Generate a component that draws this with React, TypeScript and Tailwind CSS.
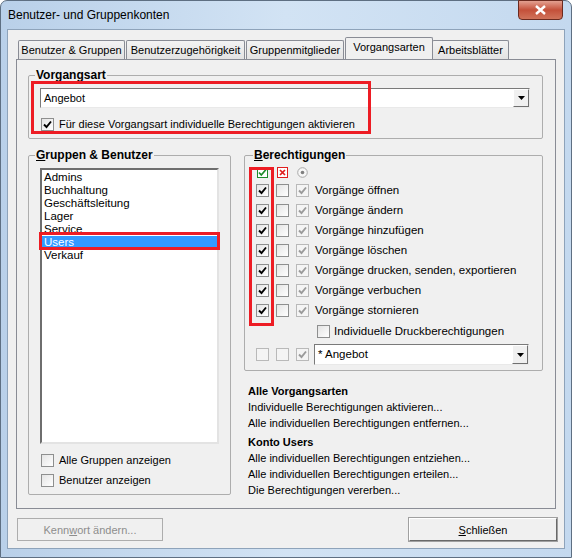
import React from "react";

const font = { fontFamily: '"Liberation Sans", Arial, sans-serif' };

function Check({ color = "#000" }: { color?: string }) {
  return (
    <svg width="9" height="9" viewBox="0 0 9 9" className="block">
      <polyline points="1,4.5 3.5,7 8,1.5" fill="none" stroke={color} strokeWidth="1.9" />
    </svg>
  );
}

function Box({ checked, disabled, grayCheck }: { checked?: boolean; disabled?: boolean; grayCheck?: boolean }) {
  return (
    <span
      className={
        "flex items-center justify-center w-[13px] h-[13px] shrink-0 border " +
        (disabled ? "border-[#b9b9b9] bg-[#f4f4f4]" : "border-[#8e8f8f] bg-gradient-to-br from-[#e4e4e4] to-white")
      }
    >
      {checked && <Check color={grayCheck ? "#9a9a9a" : "#000"} />}
    </span>
  );
}

function Combo({ value, className }: { value: string; className: string }) {
  return (
    <div className={"flex items-center bg-white border border-t-[#7a7a7a] border-l-[#7a7a7a] border-r-[#e9e9e9] border-b-[#e9e9e9] " + className}>
      <span className="flex-1 pl-[3px] leading-none">{value}</span>
      <span className="flex items-center justify-center w-[16px] h-full bg-[#f0f0f0] border border-t-white border-l-white border-r-[#707070] border-b-[#707070]">
        <svg width="7" height="4" viewBox="0 0 7 4">
          <polygon points="0,0 7,0 3.5,4" fill="#000" />
        </svg>
      </span>
    </div>
  );
}

function Tab({ label, selected, w }: { label: string; selected?: boolean; w: string }) {
  return selected ? (
    <div className={"relative z-10 -mx-[2px] h-[22px] -mb-px border border-[#898c95] border-b-0 rounded-t-[2px] bg-[#f0f0f0] pt-[2px] text-center whitespace-nowrap " + w}>
      {label}
    </div>
  ) : (
    <div className={"h-[19px] mt-[3px] border border-[#898c95] border-b-0 rounded-t-[2px] bg-gradient-to-b from-[#f3f3f3] to-[#e3e3e3] pt-[2px] text-center whitespace-nowrap " + w}>
      {label}
    </div>
  );
}

const rows = [
  "Vorgänge öffnen",
  "Vorgänge ändern",
  "Vorgänge hinzufügen",
  "Vorgänge löschen",
  "Vorgänge drucken, senden, exportieren",
  "Vorgänge verbuchen",
  "Vorgänge stornieren",
];

const groups = ["Admins", "Buchhaltung", "Geschäftsleitung", "Lager", "Service", "Users", "Verkauf"];

export default function App() {
  return (
    <div style={font} className="w-[572px] h-[558px] text-black text-[11px] leading-[14px] bg-white">
      <div className="w-[572px] h-[558px] rounded-t-[7px] border border-[#5e6f82] bg-gradient-to-r from-[#b9d0e9] via-[#d2e3f4] to-[#c4d9ef] flex flex-col">
        {/* title bar */}
        <div className="h-[28px] flex items-start">
          <span className="pl-[7px] pt-[7px] text-[12px] text-black">Benutzer- und Gruppenkonten</span>
          <div className="ml-auto mr-[8px] w-[45px] h-[20px] -mt-px rounded-b-[4px] border border-[#6b2a1f] bg-gradient-to-b from-[#e3a091] via-[#c4503a] to-[#d0735a] flex items-center justify-center">
            <svg width="11" height="10" viewBox="0 0 11 10">
              <path d="M1 1 L10 9 M10 1 L1 9" stroke="#fff" strokeWidth="2.4" />
            </svg>
          </div>
        </div>

        {/* client */}
        <div className="mx-[6px] h-[520px] border border-[#8ea3ba] bg-[#f0f0f0] px-[8px] pt-[7px] flex flex-col">
          <div className="flex h-[22px] items-start pl-[2px]">
            <Tab label="Benutzer & Gruppen" w="w-[107px]" />
            <Tab label="Benutzerzugehörigkeit" w="w-[119px] ml-[1px]" />
            <Tab label="Gruppenmitglieder" w="w-[98px] ml-[1px]" />
            <Tab label="Vorgangsarten" selected w="w-[88px] ml-[1px]" />
            <Tab label="Arbeitsblätter" w="w-[77px] ml-[1px]" />
          </div>

          {/* tab page */}
          <div className="h-[450px] border border-[#898c95] bg-[#f0f0f0] px-[11px] pt-[8px]">
            <fieldset className="relative h-[71px] border border-[#adadad] rounded-[2px] pl-[11px] pt-[6px] w-[515px]">
              <legend className="-ml-[5px] px-[1px] font-bold text-[12px] leading-[14px]">Vorgangsart</legend>
              <Combo value="Angebot" className="w-[490px] h-[20px]" />
              <div className="flex items-center gap-[3px] mt-[9px]">
                <span className="ml-px"><Box checked /></span>
                <span className="ml-[2px]">Für diese Vorgangsart individuelle Berechtigungen aktivieren</span>
              </div>
              <div className="absolute left-[2px] top-[-1px] w-[340px] h-[53px] border-[3px] border-[#ed1c24]" />
            </fieldset>

            <div className="flex mt-[9px] gap-[13px]">
              <fieldset className="h-[347px] w-[203px] border border-[#adadad] rounded-[2px] pl-[11px] pt-[6px]">
                <legend className="-ml-[5px] px-[1px] font-bold text-[12px] leading-[14px]">
                  <span className="underline">G</span>ruppen &amp; Benutzer
                </legend>
                <div className="relative w-[179px] h-[276px] bg-white border-2 border-t-[#6e6e6e] border-l-[#6e6e6e] border-r-[#e3e3e3] border-b-[#e3e3e3] pt-px">
                  {groups.map((g) => (
                    <div
                      key={g}
                      className={"h-[13px] pl-[2px] leading-[13px] text-[11.5px] " + (g === "Users" ? "bg-[#3399ff] text-white" : "")}
                    >
                      {g}
                    </div>
                  ))}
                  <div className="absolute left-[-3px] top-[62px] w-[181px] h-[18px] border-[3px] border-[#ed1c24]" />
                </div>
                <div className="flex items-center gap-[5px] mt-[9px] ml-px">
                  <Box />
                  <span>Alle Gruppen anzeigen</span>
                </div>
                <div className="flex items-center gap-[5px] mt-[6px] ml-px">
                  <Box />
                  <span>Benutzer anzeigen</span>
                </div>
              </fieldset>

              <div className="flex flex-col">
                <fieldset className="relative h-[223px] w-[299px] border border-[#adadad] rounded-[2px] pl-[11px] pt-[4px]">
                  <legend className="-ml-[3px] px-[1px] font-bold text-[12px] leading-[14px]">
                    <span className="underline">B</span>erechtigungen
                  </legend>
                  <div className="flex items-center gap-[9px] h-[12px] ml-px">
                    <svg width="11" height="11" viewBox="0 0 11 11">
                      <rect x="0.5" y="0.5" width="10" height="10" fill="#fff" stroke="#1d8a2a" />
                      <polyline points="2,5.5 4.3,8 9,2.5" fill="none" stroke="#1d8a2a" strokeWidth="1.7" />
                    </svg>
                    <svg width="11" height="11" viewBox="0 0 11 11">
                      <rect x="0.5" y="0.5" width="10" height="10" fill="#fff" stroke="#e01e1e" />
                      <path d="M3 3 L8 8 M8 3 L3 8" stroke="#e01e1e" strokeWidth="1.7" />
                    </svg>
                    <svg width="11" height="11" viewBox="0 0 11 11">
                      <circle cx="5.5" cy="5.5" r="4.8" fill="#f7f7f7" stroke="#a8a8a8" />
                      <circle cx="5.5" cy="5.5" r="1.8" fill="#7f7f7f" />
                    </svg>
                  </div>
                  <div className="flex flex-col gap-[6px] mt-[5px]">
                    {rows.map((r) => (
                      <div key={r} className="flex items-center gap-[7px] h-[14px]">
                        <Box checked />
                        <Box />
                        <Box checked disabled grayCheck />
                        <span className="-ml-px text-[11.5px]">{r}</span>
                      </div>
                    ))}
                  </div>
                  <div className="flex items-center gap-[4px] ml-[61px] mt-[7px]">
                    <Box />
                    <span className="text-[11.5px]">Individuelle Druckberechtigungen</span>
                  </div>
                  <div className="flex items-center gap-[7px] mt-[6px]">
                    <Box disabled />
                    <Box disabled />
                    <Box checked disabled grayCheck />
                    <Combo value="* Angebot" className="w-[215px] h-[21px] -ml-[2px] text-[11.5px]" />
                  </div>
                  <div className="absolute left-[4px] top-[5px] w-[25px] h-[159px] border-[3px] border-[#ed1c24]" />
                </fieldset>

                <div className="mt-[12px] pl-[4px] leading-[16px]">
                  <div className="font-bold">Alle Vorgangsarten</div>
                  <div>Individuelle Berechtigungen aktivieren...</div>
                  <div>Alle individuellen Berechtigungen entfernen...</div>
                  <div className="font-bold mt-[3px]">Konto Users</div>
                  <div>Alle individuellen Berechtigungen entziehen...</div>
                  <div>Alle individuellen Berechtigungen erteilen...</div>
                  <div>Die Berechtigungen vererben...</div>
                </div>
              </div>
            </div>
          </div>

          {/* buttons */}
          <div className="flex justify-between mt-[9px] pl-[1px]">
            <div className="w-[146px] h-[23px] border border-[#adadad] bg-[#f0f0f0] flex items-center justify-center text-[#8d8d8d]">
              Kenn<span className="underline">w</span>ort ändern...
            </div>
            <div className="w-[148px] h-[23px] -mr-px border border-t-white border-l-white border-r-[#696969] border-b-[#696969] bg-[#f0f0f0] shadow-[0_0_0_1px_#a0a0a0] flex items-center justify-center">
              <span className="underline">S</span>chließen
            </div>
          </div>
        </div>
      </div>
    </div>
  );
}
